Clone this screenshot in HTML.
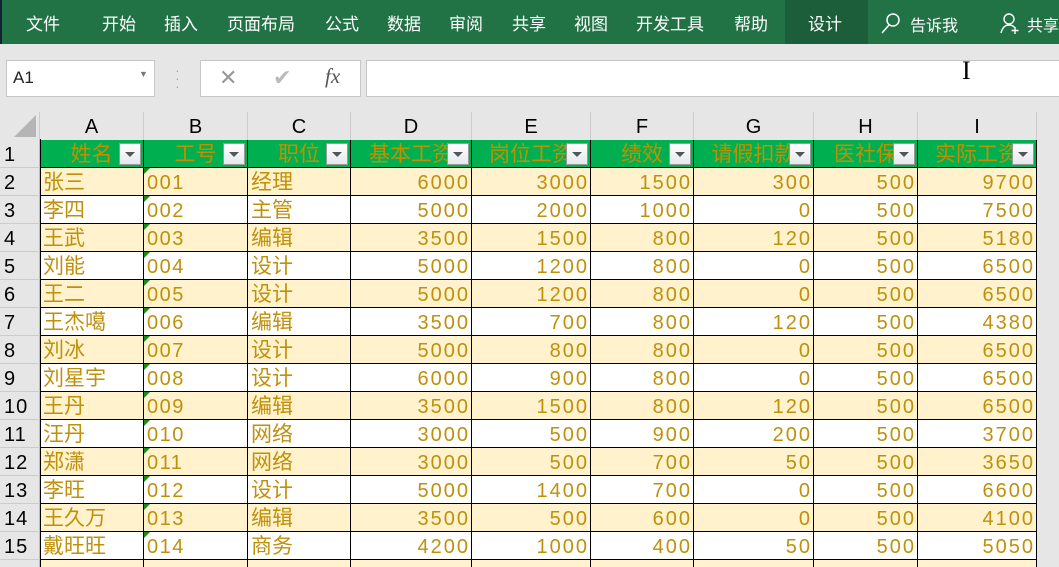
<!DOCTYPE html>
<html style="width:1059px;height:567px;overflow:hidden"><head><meta charset="utf-8"><style>
*{margin:0;padding:0;box-sizing:border-box}
body{width:1059px;height:567px;overflow:hidden;background:#e6e6e6;font-family:"Liberation Sans","Noto Sans CJK SC",sans-serif;position:relative}
.rib{position:absolute;left:0;top:0;width:1059px;height:44px;background:#217346;border-left:2px solid #123;}
.rib span{position:absolute;top:10px;color:#fff;font-size:17px;white-space:nowrap}
.sel{position:absolute;left:783px;top:0;width:83px;height:44px;background:#1d5e3a}
.box{position:absolute;background:#fff;border:1px solid #c6c6c6}
.c{position:absolute;overflow:hidden;white-space:nowrap;font-size:21px;line-height:30px;color:#c0900a;border-right:1px solid #000;border-bottom:1px solid #000;padding:0 3px}
.r{text-align:right;font-size:20px;letter-spacing:2px;padding-right:1px}
.n{font-size:20px;letter-spacing:1.5px}
.rh{position:absolute;left:0;width:40px;font-size:20px;line-height:30px;color:#000;background:#e6e6e6;padding-left:4px;border-bottom:1px solid #ccc;border-right:1px solid #bbb;letter-spacing:1px}
.ch{position:absolute;top:112px;height:28px;font-size:20px;line-height:30px;text-align:center;color:#000;border-right:1px solid #ccc}
.hd{background:#00b050;color:#c09000;text-align:center;font-size:21px;padding:0}
.dd{position:absolute;top:3px;right:2px;width:22px;height:22px;background:linear-gradient(#fff,#e4e8ee);border:1px solid #999}
.dd:after{content:"";position:absolute;left:5px;top:8px;border:5px solid transparent;border-top:5px solid #555;border-bottom:0}
.tri{position:absolute;left:0;top:0;border-top:6px solid #1a8a1a;border-right:6px solid transparent}
</style></head><body>
<div class="rib">
<span style="left:24px">文件</span><span style="left:100px">开始</span><span style="left:162px">插入</span><span style="left:225px">页面布局</span><span style="left:323px">公式</span><span style="left:385px">数据</span><span style="left:447px">审阅</span><span style="left:510px">共享</span><span style="left:572px">视图</span><span style="left:634px">开发工具</span><span style="left:732px">帮助</span>
<div class="sel"></div><span style="left:806px">设计</span>
<svg style="position:absolute;left:878px;top:12px" width="22" height="22"><circle cx="13" cy="8" r="6" fill="none" stroke="#fff" stroke-width="1.5"/><line x1="9" y1="13" x2="2" y2="21" stroke="#fff" stroke-width="1.5"/></svg>
<span style="left:908px;font-size:16px;top:12px">告诉我</span>
<svg style="position:absolute;left:997px;top:12px" width="22" height="22"><circle cx="10" cy="7" r="5" fill="none" stroke="#fff" stroke-width="1.4"/><path d="M2 21 Q4 13 10 13 Q14 13 16 16 M16 15 v7 M12.5 18.5 h7" fill="none" stroke="#fff" stroke-width="1.4"/></svg>
<span style="left:1025px;font-size:16px;top:12px">共享</span>
</div>
<div class="box" style="left:6px;top:60px;width:149px;height:37px"><span style="position:absolute;left:6px;top:7px;font-size:17px;color:#222">A1</span><span style="position:absolute;left:132px;top:8px;font-size:9px;color:#777">▼</span></div>
<span style="position:absolute;left:175px;top:66px;color:#aaa;font-size:14px;line-height:8px">·<br>·<br>·</span>
<div class="box" style="left:200px;top:60px;width:161px;height:37px"><span style="position:absolute;left:18px;top:4px;font-size:22px;color:#999">✕</span><span style="position:absolute;left:72px;top:4px;font-size:22px;color:#bbb">✔</span><span style="position:absolute;left:124px;top:3px;font-size:21px;color:#555;font-family:'Liberation Serif',serif;font-style:italic">fx</span></div>
<div class="box" style="left:366px;top:60px;width:700px;height:37px"></div>
<span style="position:absolute;left:962px;top:56px;font-size:26px;color:#000;font-family:'Liberation Serif',serif">I</span>
<div style="position:absolute;left:0;top:112px;width:40px;height:28px;background:#e6e6e6;border-right:1px solid #ccc"><div style="position:absolute;right:3px;bottom:3px;border-bottom:22px solid #b5b5b5;border-left:22px solid transparent"></div></div>
<div id="g"></div>
<script>
var xs=[40,144,248,351,472,591,694,814,918,1037];
var L="ABCDEFGHI";
var h="";
for(var i=0;i<9;i++)h+='<div class="ch" style="left:'+xs[i]+'px;width:'+(xs[i+1]-xs[i])+'px">'+L[i]+'</div>';
var hd=["姓名","工号","职位","基本工资","岗位工资","绩效","请假扣款","医社保","实际工资"];
h+='<div class="rh" style="top:140px;height:28px">1</div>';
for(i=0;i<9;i++)h+='<div class="c hd" style="left:'+xs[i]+'px;top:140px;width:'+(xs[i+1]-xs[i])+'px;height:28px">'+hd[i]+'<div class="dd"></div></div>';
var d=[["张三","001","经理",6000,3000,1500,300,500,9700],["李四","002","主管",5000,2000,1000,0,500,7500],["王武","003","编辑",3500,1500,800,120,500,5180],["刘能","004","设计",5000,1200,800,0,500,6500],["王二","005","设计",5000,1200,800,0,500,6500],["王杰噶","006","编辑",3500,700,800,120,500,4380],["刘冰","007","设计",5000,800,800,0,500,6500],["刘星宇","008","设计",6000,900,800,0,500,6500],["王丹","009","编辑",3500,1500,800,120,500,6500],["汪丹","010","网络",3000,500,900,200,500,3700],["郑潇","011","网络",3000,500,700,50,500,3650],["李旺","012","设计",5000,1400,700,0,500,6600],["王久万","013","编辑",3500,500,600,0,500,4100],["戴旺旺","014","商务",4200,1000,400,50,500,5050]];
for(var r=0;r<d.length;r++){var y=168+r*28;var bg=r%2==0?"#fff2cc":"#fff";
h+='<div class="rh" style="top:'+y+'px;height:28px">'+(r+2)+'</div>';
for(i=0;i<9;i++){h+='<div class="c'+(i>2?' r':(i==1?' n':''))+'" style="left:'+xs[i]+'px;top:'+y+'px;width:'+(xs[i+1]-xs[i])+'px;height:28px;background:'+bg+'">'+(i==1?'<div class="tri"></div>':'')+d[r][i]+'</div>';}}
h+='<div style="position:absolute;left:0;top:560px;width:40px;height:7px;background:#e6e6e6;border-right:1px solid #bbb"></div>';
for(i=0;i<9;i++)h+='<div style="position:absolute;left:'+xs[i]+'px;top:560px;width:'+(xs[i+1]-xs[i])+'px;height:7px;background:#fff2cc;border-right:1px solid #000"></div>';
h+='<div style="position:absolute;left:40px;top:139px;width:1px;height:430px;background:#000"></div>';
document.getElementById("g").innerHTML=h;
</script>
</body></html>
